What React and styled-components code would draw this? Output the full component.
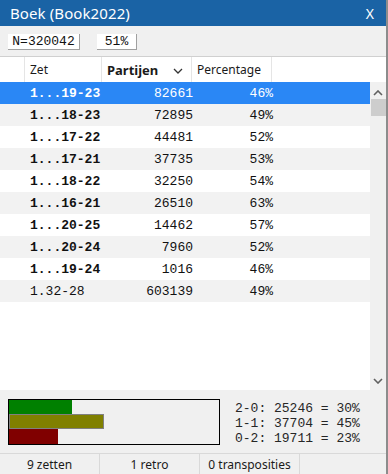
import React from 'react';
import styled, { createGlobalStyle } from 'styled-components';

const GlobalStyle = createGlobalStyle`
  html, body {
    margin: 0;
    padding: 0;
    background: #f0f0f0;
  }
`;

const UI_FONT = `"Noto Sans", "Open Sans", sans-serif`;
const MONO = `"Liberation Mono", "Courier New", monospace`;

const rows = [
  { zet: '1...19-23', n: '82661', p: '46%', bold: true, selected: true },
  { zet: '1...18-23', n: '72895', p: '49%', bold: true },
  { zet: '1...17-22', n: '44481', p: '52%', bold: true },
  { zet: '1...17-21', n: '37735', p: '53%', bold: true },
  { zet: '1...18-22', n: '32250', p: '54%', bold: true },
  { zet: '1...16-21', n: '26510', p: '63%', bold: true },
  { zet: '1...20-25', n: '14462', p: '57%', bold: true },
  { zet: '1...20-24', n: '7960', p: '52%', bold: true },
  { zet: '1...19-24', n: '1016', p: '46%', bold: true },
  { zet: '1.32-28', n: '603139', p: '49%', bold: false },
];

const bars = [
  { color: '#008000', width: 63 },
  { color: '#808000', width: 95, outlined: true },
  { color: '#800000', width: 49 },
];

const stats = ['2-0: 25246 = 30%', '1-1: 37704 = 45%', '0-2: 19711 = 23%'];

const status = ['9 zetten', '1 retro', '0 transposities'];

function App() {
  return (
    <>
      <GlobalStyle />
      <Window>
        <TitleBar>
          <Title>Boek (Book2022)</Title>
          <Close>X</Close>
        </TitleBar>

        <Toolbar>
          <Field $width={72}>N=320042</Field>
          <Field $width={40}>51%</Field>
        </Toolbar>

        <HeaderRow>
          <HeadCell $width={25} />
          <HeadCell $width={77}>Zet</HeadCell>
          <HeadCell $width={90} $bold>
            Partijen
            <SortIcon viewBox="0 0 10 6" width="10" height="6">
              <path d="M1 1 L5 5 L9 1" fill="none" stroke="#333" strokeWidth="1.3" />
            </SortIcon>
          </HeadCell>
          <HeadCell $width={80}>Percentage</HeadCell>
        </HeaderRow>

        <Body>
          <List>
            {rows.map((r, i) => (
              <Row key={r.zet} $selected={r.selected} $shaded={i % 2 === 1}>
                <MoveCell $bold={r.bold}>{r.zet}</MoveCell>
                <NumCell $width={92}>{r.n}</NumCell>
                <NumCell $width={80}>{r.p}</NumCell>
              </Row>
            ))}
          </List>
          <ScrollBar>
            <svg viewBox="0 0 10 6" width="10" height="6">
              <path d="M1 5 L5 1 L9 5" fill="none" stroke="#606060" strokeWidth="1.6" />
            </svg>
            <Thumb />
            <Track />
            <svg viewBox="0 0 10 6" width="10" height="6">
              <path d="M1 1 L5 5 L9 1" fill="none" stroke="#606060" strokeWidth="1.6" />
            </svg>
          </ScrollBar>
        </Body>

        <Summary>
          <Chart>
            {bars.map((b) => (
              <Bar key={b.color} $color={b.color} $outlined={b.outlined} style={{ width: b.width }} />
            ))}
          </Chart>
          <Stats>
            {stats.map((s) => (
              <div key={s}>{s}</div>
            ))}
          </Stats>
        </Summary>

        <StatusBar>
          {status.map((s) => (
            <StatusCell key={s}>{s}</StatusCell>
          ))}
        </StatusBar>
      </Window>
    </>
  );
}

const Window = styled.div`
  width: 388px;
  height: 474px;
  box-sizing: border-box;
  border-right: 2px solid #8c8c8c;
  display: flex;
  flex-direction: column;
  background: #f0f0f0;
  overflow: hidden;
`;

const TitleBar = styled.div`
  height: 26px;
  flex: none;
  background: #1a63a5;
  color: #fff;
  display: flex;
  align-items: center;
  justify-content: space-between;
  padding: 0 10px;
  font-family: ${UI_FONT};
`;

const Title = styled.span`
  font-size: 15px;
  letter-spacing: 0.1px;
`;

const Close = styled.span`
  font-size: 14px;
  margin-right: 2px;
`;

const Toolbar = styled.div`
  height: 31px;
  flex: none;
  box-sizing: border-box;
  padding: 8px 8px 0;
  display: flex;
  align-items: flex-start;
  gap: 17px;
  border-bottom: 1px solid #d0d0d0;
`;

const Field = styled.div`
  width: ${(p) => p.$width}px;
  height: 16px;
  box-sizing: border-box;
  background: #fff;
  border-right: 1px solid #a0a0a0;
  border-bottom: 1px solid #a0a0a0;
  font-family: ${MONO};
  font-size: 13px;
  line-height: 15px;
  color: #111;
  text-align: center;
`;

const HeaderRow = styled.div`
  height: 25px;
  flex: none;
  box-sizing: border-box;
  background: #fff;
  display: flex;
  font-family: ${UI_FONT};
  font-size: 12px;
  color: #1a1a1a;
`;

const HeadCell = styled.div`
  width: ${(p) => p.$width}px;
  flex: none;
  box-sizing: border-box;
  border-right: 1px solid #e5e5e5;
  padding-left: 5px;
  display: flex;
  align-items: center;
  justify-content: space-between;
  padding-right: 8px;
  font-weight: ${(p) => (p.$bold ? 700 : 400)};
  font-size: ${(p) => (p.$bold ? '13px' : '12px')};
`;

const SortIcon = styled.svg`
  margin-top: 3px;
`;

const Body = styled.div`
  height: 308px;
  flex: none;
  display: flex;
  background: #fff;
`;

const List = styled.div`
  flex: 1;
  display: flex;
  flex-direction: column;
`;

const Row = styled.div`
  height: 22px;
  display: flex;
  align-items: center;
  background: ${(p) => (p.$selected ? '#2a87f5' : p.$shaded ? '#f2f2f2' : '#fff')};
  color: ${(p) => (p.$selected ? '#fff' : '#111')};
  font-family: ${MONO};
  font-size: 13px;
`;

const MoveCell = styled.div`
  width: 102px;
  padding-left: 30px;
  box-sizing: border-box;
  font-weight: ${(p) => (p.$bold ? 700 : 400)};
`;

const NumCell = styled.div`
  width: ${(p) => p.$width}px;
  text-align: right;
  box-sizing: border-box;
  padding-right: 1px;
`;

const ScrollBar = styled.div`
  width: 16px;
  flex: none;
  background: #f0f0f0;
  display: flex;
  flex-direction: column;
  align-items: center;
  padding: 8px 0 6px;
  box-sizing: border-box;
`;

const Thumb = styled.div`
  width: 15px;
  height: 17px;
  margin-top: 3px;
  background: #cdcdcd;
`;

const Track = styled.div`
  flex: 1;
`;

const Summary = styled.div`
  height: 64px;
  flex: none;
  box-sizing: border-box;
  display: flex;
  align-items: flex-start;
  padding: 9px 0 0 8px;
  border-bottom: 1px solid #d9d9d9;
`;

const Chart = styled.div`
  width: 212px;
  height: 46px;
  box-sizing: border-box;
  border: 1px solid #000;
  background: #f0f0f0;
  display: flex;
  flex-direction: column;
`;

const Bar = styled.div`
  height: 15px;
  box-sizing: border-box;
  background: ${(p) => p.$color};
  border: ${(p) => (p.$outlined ? '1px solid #808080' : 'none')};
  &:first-child {
    height: 14px;
  }
`;

const Stats = styled.div`
  margin-left: 15px;
  padding-top: 2px;
  font-family: ${MONO};
  font-size: 13px;
  line-height: 15px;
  color: #262626;
`;

const StatusBar = styled.div`
  flex: 1;
  display: flex;
  font-family: ${UI_FONT};
  font-size: 12px;
  color: #1a1a1a;
`;

const StatusCell = styled.div`
  width: 100px;
  box-sizing: border-box;
  border-right: 1px solid #d9d9d9;
  display: flex;
  align-items: center;
  justify-content: center;
`;

export default App;
